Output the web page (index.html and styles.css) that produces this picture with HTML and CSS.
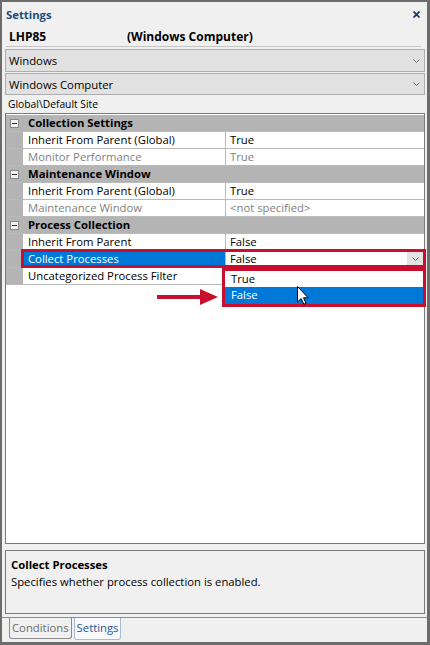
FILE: index.html
```html
<!DOCTYPE html>
<html>
<head>
<meta charset="utf-8">
<link rel="stylesheet" href="styles.css">
</head>
<body>
<div class="window">
  <div class="titlebar">
    <span class="title">Settings</span>
    <svg class="close" width="7" height="7" viewBox="0 0 7 7"><path d="M0.5 0.5 L6.5 6.5 M6.5 0.5 L0.5 6.5" stroke="#1e3c68" stroke-width="1.8" fill="none"/></svg>
  </div>
  <div class="objrow"><span class="objname">LHP85</span><span>(Windows Computer)</span></div>
  <div class="combo first"><span>Windows</span><svg width="7" height="4" viewBox="0 0 7 4"><path d="M0.5 0.5 L3.5 3.5 L6.5 0.5" stroke="#707070" stroke-width="1" fill="none"/></svg></div>
  <div class="combo second"><span>Windows Computer</span><svg width="7" height="4" viewBox="0 0 7 4"><path d="M0.5 0.5 L3.5 3.5 L6.5 0.5" stroke="#707070" stroke-width="1" fill="none"/></svg></div>
  <div class="path">Global\Default Site</div>

  <div class="grid">
    <div class="row cat"><span class="margin"><span class="minus"></span></span><span class="catlabel">Collection Settings</span></div>
    <div class="row"><span class="margin"></span><span class="name">Inherit From Parent (Global)</span><span class="value">True</span></div>
    <div class="row dim"><span class="margin"></span><span class="name">Monitor Performance</span><span class="value">True</span></div>
    <div class="row cat"><span class="margin"><span class="minus"></span></span><span class="catlabel">Maintenance Window</span></div>
    <div class="row"><span class="margin"></span><span class="name">Inherit From Parent (Global)</span><span class="value">True</span></div>
    <div class="row dim"><span class="margin"></span><span class="name">Maintenance Window</span><span class="value">&lt;not specified&gt;</span></div>
    <div class="row cat"><span class="margin"><span class="minus"></span></span><span class="catlabel">Process Collection</span></div>
    <div class="row"><span class="margin"></span><span class="name">Inherit From Parent</span><span class="value">False</span></div>
    <div class="row selected"><span class="margin"></span><span class="name">Collect Processes</span><span class="value"><span>False</span><span class="ddbtn"><svg width="7" height="4" viewBox="0 0 7 4"><path d="M0.5 0.5 L3.5 3.5 L6.5 0.5" stroke="#606060" stroke-width="1" fill="none"/></svg></span></span></div>
    <div class="row"><span class="margin"></span><span class="name">Uncategorized Process Filter</span><span class="value"></span></div>

    <div class="rowframe"></div>
    <div class="listframe">
      <div class="opt">True</div>
      <div class="opt sel">False</div>
    </div>
    <svg class="arrow" width="62" height="17" viewBox="0 0 62 17"><rect x="0" y="6" width="45" height="4" fill="#c8102e"/><path d="M43 0 L61 8 L43 16 Z" fill="#c8102e"/></svg>
    <svg class="cursor" width="12" height="19" viewBox="0 0 12 19"><path d="M0.5 0.5 L0.5 16 L4.2 12.6 L6.8 18.3 L9 17.3 L6.5 11.8 L11.2 11.8 Z" fill="#ffffff" stroke="#000000" stroke-width="1" stroke-linejoin="miter"/></svg>
  </div>

  <div class="desc">
    <div class="desctitle">Collect Processes</div>
    <div>Specifies whether process collection is enabled.</div>
  </div>

  <div class="tabs">
    <div class="tab">Conditions</div>
    <div class="tab active">Settings</div>
  </div>
</div>
</body>
</html>
```

FILE: styles.css
```css
* { box-sizing: border-box; }
body {
  margin: 0;
  font-family: "Open Sans", "Noto Sans", sans-serif;
  font-size: 11.3px;
  color: #000;
}
.window {
  width: 430px;
  height: 645px;
  border-style: solid;
  border-color: #6c6c6c;
  border-width: 2px 3px 3px 2px;
  background: #f0f0f0;
  display: flex;
  flex-direction: column;
  overflow: hidden;
}
.titlebar {
  height: 24px;
  flex: none;
  display: flex;
  align-items: center;
  justify-content: space-between;
  padding: 0 7px 0 4px;
}
.title {
  font-weight: bold;
  color: #1e4d7b;
}
.close { display: block; }
.objrow {
  height: 21px;
  flex: none;
  margin: 0 6px 0 4px;
  padding-left: 3px;
  border-bottom: 1px solid #c4c4c4;
  display: flex;
  align-items: center;
  font-weight: bold;
  font-size: 12px;
}
.objname { width: 118px; }
.combo {
  flex: none;
  margin: 0 2px 0 3px;
  border: 1px solid #adadad;
  background: #e1e1e1;
  display: flex;
  align-items: center;
  justify-content: space-between;
  padding: 0 4px 0 3px;
}
.combo svg { display: block; }
.combo.first { margin-top: 2px; height: 23px; }
.combo.second { margin-top: 1px; height: 22px; }
.path {
  flex: none;
  height: 18px;
  line-height: 18px;
  padding-left: 6px;
  font-size: 10.3px;
}
.grid {
  flex: none;
  position: relative;
  height: 431px;
  margin: 0 2px 0 3px;
  border: 1px solid #7a7a7a;
  background: #fff;
  padding-top: 1px;
}
.row {
  display: flex;
  height: 17px;
  border-bottom: 1px solid #b9b9b9;
  line-height: 16px;
}
.margin {
  width: 17px;
  flex: none;
  background: #b4b4b4;
  display: flex;
  align-items: center;
  justify-content: center;
}
.name {
  width: 202px;
  flex: none;
  padding-left: 5px;
  white-space: nowrap;
}
.value {
  flex: 1;
  border-left: 1px solid #b9b9b9;
  padding-left: 4px;
  display: flex;
  align-items: center;
  justify-content: space-between;
  white-space: nowrap;
}
.cat { background: #b4b4b4; }
.catlabel {
  font-weight: bold;
  padding-left: 5px;
}
.minus {
  width: 9px;
  height: 9px;
  border: 1px solid #8a8a8a;
  background: #f2f2f2;
  position: relative;
}
.minus::after {
  content: "";
  position: absolute;
  left: 1px;
  top: 3px;
  width: 5px;
  height: 1px;
  background: #333;
}
.dim .name, .dim .value { color: #7f7f7f; }
.selected .name {
  background: #0078d7;
  color: #fff;
}
.ddbtn {
  width: 16px;
  height: 15px;
  margin-right: 1px;
  background: #e3e3e3;
  display: flex;
  align-items: center;
  justify-content: center;
}
.ddbtn svg { display: block; }
.rowframe {
  position: absolute;
  left: 15px;
  top: 135px;
  width: 405px;
  height: 19px;
  border: 3px solid #c8102e;
}
.listframe {
  position: absolute;
  left: 216px;
  top: 154px;
  width: 204px;
  height: 39px;
  border: 3px solid #c8102e;
  background: #fff;
}
.opt {
  height: 16px;
  line-height: 16px;
  padding-left: 6px;
}
.opt.sel {
  height: 17px;
  background: #0078d7;
  color: #fff;
}
.arrow {
  position: absolute;
  left: 151px;
  top: 175px;
}
.cursor {
  position: absolute;
  left: 291px;
  top: 172px;
}
.desc {
  flex: none;
  margin: 6px 2px 0 3px;
  height: 64px;
  border: 1px solid #7a7a7a;
  padding: 5px 5px;
  line-height: 17px;
}
.desctitle { font-weight: bold; }
.tabs {
  flex: none;
  margin-top: 3px;
  height: 25px;
  border-top: 1px solid #8c8c8c;
  display: flex;
  align-items: flex-start;
  padding-left: 7px;
  gap: 2px;
}
.tab {
  height: 21px;
  line-height: 20px;
  padding: 0 2px;
  border: 1px solid #8c8c8c;
  border-top: none;
  border-radius: 0 0 3px 3px;
  color: #6d6d6d;
  background: #f0f0f0;
}
.tab.active {
  height: 22px;
  color: #1f5896;
  border-color: #a9bad2;
  background: #f8fafd;
}
```
